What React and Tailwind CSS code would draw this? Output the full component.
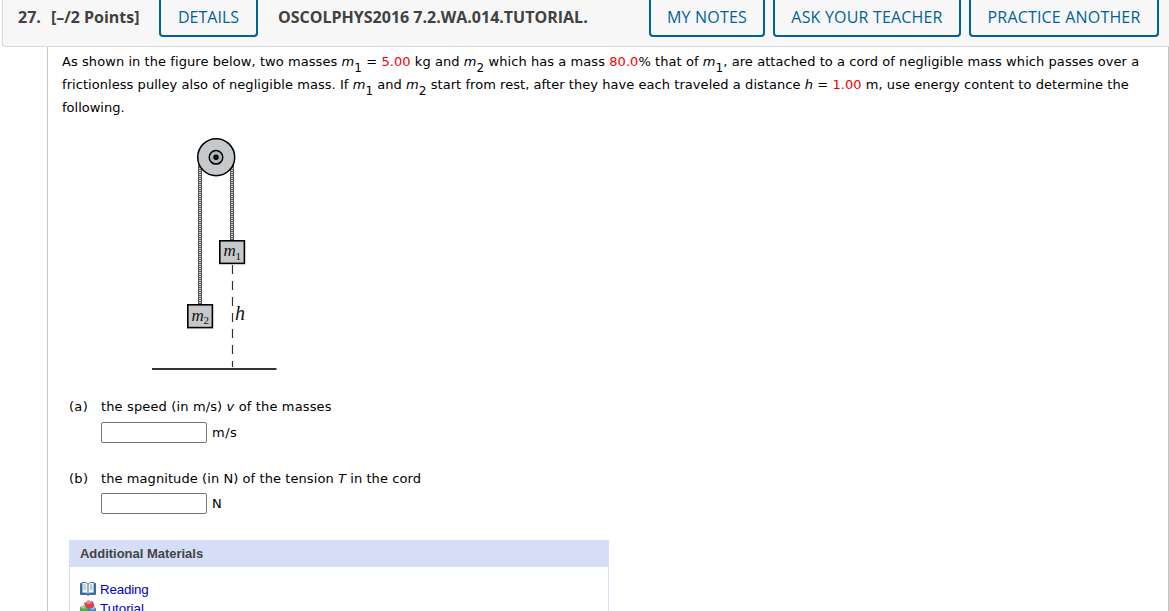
const Sub = ({ children }) => (
  <sub className="relative top-[5.5px] align-baseline text-[12px] leading-none">{children}</sub>
);

const Red = ({ children }) => <span className="text-[#ee0000]">{children}</span>;

const HeaderButton = ({ className, children }) => (
  <button
    className={`h-[37px] shrink-0 whitespace-nowrap rounded-b-[4px] border-2 border-t-0 border-[#006298] text-center text-[16px] font-medium text-[#006298] ${className}`}
  >
    <span className="block h-[35px] leading-[34px]">{children}</span>
  </button>
);

const Header = () => (
  <header className="ml-[2px] flex h-[47px] items-start rounded-bl-[3px] border-b border-l border-[#d9d9d9] bg-[#f7f7f7] font-['Open_Sans',sans-serif] text-[16px] font-bold leading-[34px] text-[#414141]">
    <span className="ml-[15px] w-[33px]">27.</span>
    <span className="w-[108px] whitespace-nowrap tracking-[-0.03px]">[–/2 Points]</span>
    <HeaderButton className="w-[99px]">DETAILS</HeaderButton>
    <span className="ml-[20px] w-[371px] whitespace-nowrap">
      OSCOLPHYS2016 7.2.WA.014.TUTORIAL.
    </span>
    <div className="flex gap-2 tracking-[0.18px]">
      <HeaderButton className="w-[116px]">MY NOTES</HeaderButton>
      <HeaderButton className="w-[188px]">ASK YOUR TEACHER</HeaderButton>
      <HeaderButton className="w-[190px]">PRACTICE ANOTHER</HeaderButton>
    </div>
  </header>
);

const PulleyFigure = () => (
  <svg width="150" height="256" viewBox="140 125 150 256" className="block">
    <rect x="198" y="165" width="4" height="140" fill="#555" />
    <path d="M200 166V304" stroke="#ddd" strokeWidth="2" strokeDasharray="1 1" />
    <rect x="230" y="165" width="4" height="76" fill="#555" />
    <path d="M232 166V240" stroke="#ddd" strokeWidth="2" strokeDasharray="1 1" />
    <circle cx="216.2" cy="157.2" r="18.5" fill="#c6c9cc" stroke="#000" strokeWidth="1.5" />
    <circle cx="216" cy="157.3" r="6.8" fill="#b2b4b7" stroke="#000" strokeWidth="1.5" />
    <circle cx="216" cy="157.3" r="2.7" fill="#000" />
    <circle cx="216" cy="157.3" r="0.7" fill="#555" />
    <rect x="219.8" y="240.8" width="24.6" height="22.6" fill="#c6c9cc" stroke="#000" strokeWidth="1.6" />
    <rect x="187.8" y="304.8" width="24.6" height="22.8" fill="#c6c9cc" stroke="#000" strokeWidth="1.6" />
    <path
      d="M232.5 265v9M232.5 281v9M232.5 297v9M232.5 313v9M232.5 329v9M232.5 345v9M232.5 361v6"
      stroke="#333"
      strokeWidth="1.2"
    />
    <path d="M152 369H276.500" stroke="#333" strokeWidth="2" />
    <g fontFamily="Liberation Serif, serif" fill="#111">
      <text x="223.500" y="256" fontSize="17" fontStyle="italic">m</text>
      <text x="235.500" y="260" fontSize="11">1</text>
      <text x="191.500" y="320.500" fontSize="17" fontStyle="italic">m</text>
      <text x="203.500" y="324" fontSize="11">2</text>
      <text x="235" y="319.500" fontSize="20" fontStyle="italic">h</text>
    </g>
  </svg>
);

const BookIcon = () => (
  <svg width="16" height="16" viewBox="0 0 16 16" className="relative -top-px">
    <path d="M.5 2.500H2V12h4.500l1.500 1 1.500-1H14V2.500h1.500v11H9.500L8 14.500l-1.500-1h-6z" fill="#3978a8" stroke="#245d8b" strokeWidth=".8" />
    <path d="M2 1.500h4L8 3l2-1.500h4V12h-4l-2 1-2-1H2z" fill="#f5f8fa" stroke="#2f6692" strokeWidth=".8" />
    <path d="M8 3v9.500" stroke="#3c6a8e" />
    <path d="M3.500 4h2M3.500 6h2.500M3.500 8h2.500M10 4h2M10 6h2.500M10 8h2.500" stroke="#8f9ba4" />
  </svg>
);

const BlocksIcon = () => (
  <svg width="16" height="16" viewBox="0 0 16 16" className="relative -top-px">
    <path d="M0 7l4-1.500L8 7v6l-4 2-4-2z" fill="#58a65b" />
    <path d="M0 7l4-1.500L8 7 4 9z" fill="#9ad090" />
    <path d="M8 8l4-1.500L16 8v5l-4 2-4-2z" fill="#4c83b5" />
    <path d="M8 8l4-1.500L16 8l-4 2z" fill="#9bc1df" />
    <path d="M4 3l4-2.500 5 1 1.500 5-4 2.500-5-1.500z" fill="#d9434d" />
    <path d="M4 3l4-2.500 5 1L9.500 4z" fill="#ef8a8b" />
  </svg>
);

const Answer = ({ label, unit, children, className, gap }) => (
  <div className={`flex ${className}`}>
    <span className="w-[32px] shrink-0 leading-[18px] tracking-[0.3px]">{label}</span>
    <div>
      <p className="whitespace-nowrap leading-[18px]">{children}</p>
      <div className={`flex items-center gap-[5px] ${gap}`}>
        <input className="h-[21px] w-[106px] rounded-[2px] border border-[#767676] bg-white" />
        <span className="leading-[18px] tracking-[0.5px]">{unit}</span>
      </div>
    </div>
  </div>
);

const Materials = () => (
  <section className="ml-[21px] h-[77px] w-[540px] border-x border-[#d6ddf7] font-['Liberation_Sans',Arial,sans-serif]">
    <h3 className="-mx-px h-[27px] bg-[#d6ddf7] pl-[11px] text-[13px] font-bold leading-[27px] tracking-[-0.02px] text-[#444]">
      Additional Materials
    </h3>
    <ul className="pl-[10px] pt-[13px] text-[13.33px] leading-[19px] text-[#0000cc]">
      <li className="flex h-[19px] items-center gap-1"><BookIcon /><a className="tracking-[-0.15px]">Reading</a></li>
      <li className="flex h-[19px] items-center gap-1"><BlocksIcon /><a>Tutorial</a></li>
    </ul>
  </section>
);

export default function App() {
  return (
    <div className="h-[611px] w-[1169px] overflow-hidden bg-white">
      <Header />
      <main className="ml-[47px] h-[564px] w-[1122px] border-x border-[#c4c4c4] pt-[3px] font-['DejaVu_Sans',Verdana,sans-serif] text-[13px] text-black">
        <div className="ml-[14px] whitespace-nowrap leading-[23px]">
          <p className="h-[23px] tracking-[0.07px]">
            As shown in the figure below, two masses <i>m</i><Sub>1</Sub> = <Red>5.00</Red> kg and <i>m</i><Sub>2</Sub> which has a mass <Red>80.0</Red>% that of <i>m</i><Sub>1</Sub>, are attached to a cord of negligible mass which passes over a
          </p>
          <p className="h-[23px] tracking-[0.054px]">
            frictionless pulley also of negligible mass. If <i>m</i><Sub>1</Sub> and <i>m</i><Sub>2</Sub> start from rest, after they have each traveled a distance <i>h</i> = <Red>1.00</Red> m, use energy content to determine the
          </p>
          <p className="h-[23px]">following.</p>
        </div>
        <div className="ml-[92px] mt-[6px]">
          <PulleyFigure />
        </div>
        <Answer className="ml-[21px] mt-[17px] tracking-[0.14px]" gap="mt-[6px]" label="(a)" unit="m/s">
          the speed (in m/s) <i>v</i> of the masses
        </Answer>
        <Answer className="mb-[26px] ml-[21px] mt-[27px] tracking-[0.08px]" gap="mt-[5px]" label="(b)" unit="N">
          the magnitude (in N) of the tension <i>T</i> in the cord
        </Answer>
        <Materials />
      </main>
    </div>
  );
}
